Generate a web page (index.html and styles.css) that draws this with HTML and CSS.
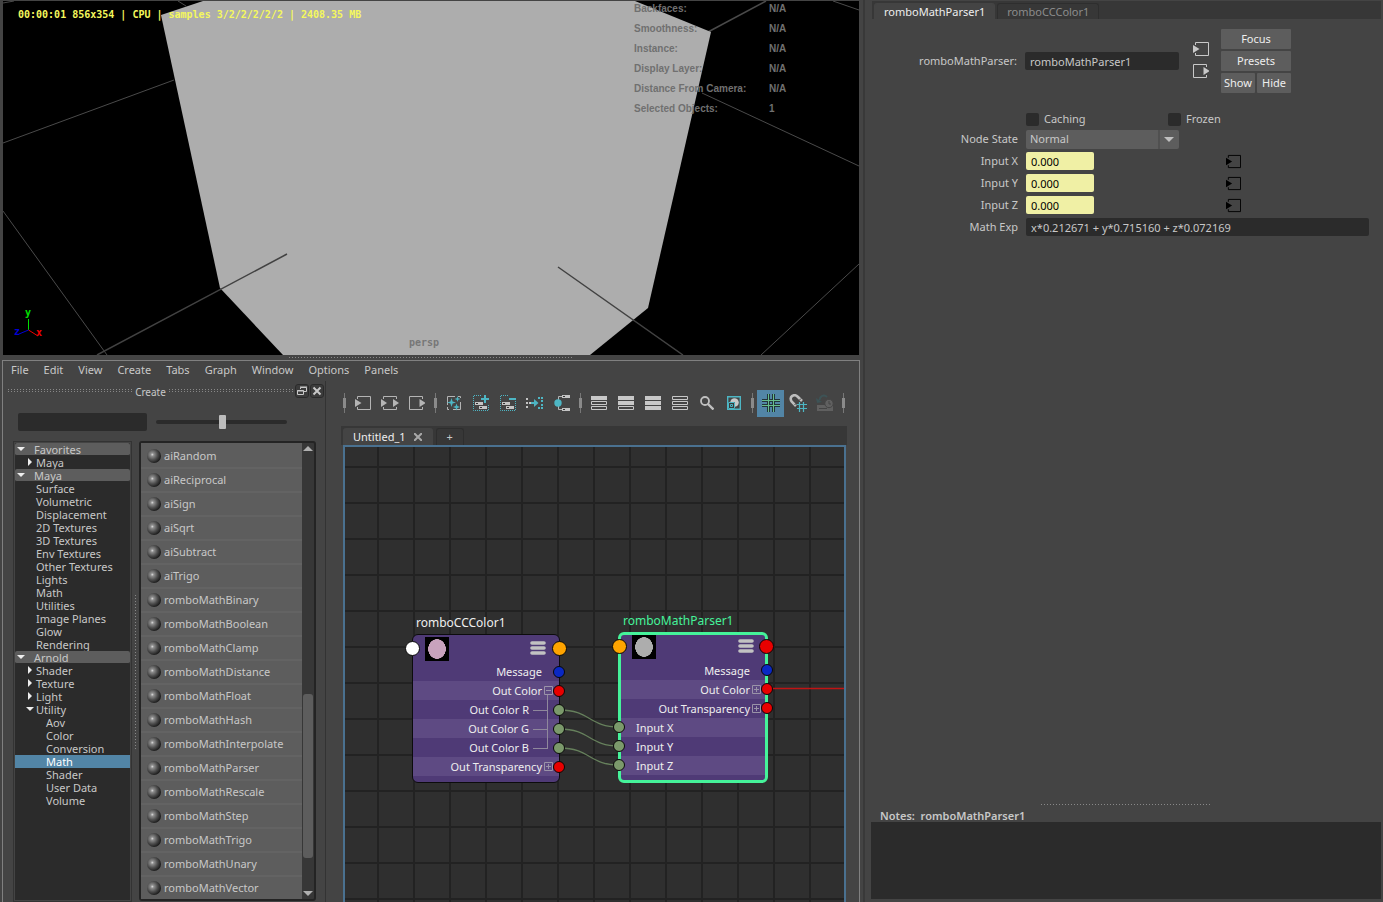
FILE: index.html
```html
<!DOCTYPE html>
<html lang="en">
<head>
<meta charset="utf-8">
<title>Node Editor</title>
<link rel="stylesheet" href="styles.css">
</head>
<body>
<svg class="defs" aria-hidden="true">
  <defs>
    <radialGradient id="ballFill" cx="0.38" cy="0.4" r="0.62">
      <stop offset="0" stop-color="#dcdcdc"/><stop offset="0.18" stop-color="#8f8f8f"/><stop offset="0.6" stop-color="#4e4e4e"/><stop offset="1" stop-color="#1c1c1c"/>
    </radialGradient>
    <symbol id="ball" viewBox="0 0 14 14"><circle cx="7" cy="7" r="7" fill="url(#ballFill)"/></symbol>
    <symbol id="into" viewBox="0 0 16 16"><path d="M2.500 4V1.500H15.500V14.500H2.500V12" fill="none" stroke="currentColor"/><path d="M0 4L6.500 8L0 12Z" fill="currentColor"/></symbol>
    <symbol id="out" viewBox="0 0 16 16"><path d="M13.500 4V1.500H0.500V14.500H13.500V12" fill="none" stroke="currentColor"/><path d="M10.500 4L17 8L10.500 12Z" fill="currentColor"/></symbol>
    <symbol id="both" viewBox="0 0 18 16"><path d="M2.500 4V1.500H15.500V4M2.500 12V14.500H15.500V12" fill="none" stroke="currentColor"/><path d="M0 4L6 8L0 12ZM12 4L18 8L12 12Z" fill="currentColor"/></symbol>
    <symbol id="bars" viewBox="0 0 14 14"><path d="M1 2H13M1 7H13M1 12H13" stroke="#c2c2c2" stroke-width="3.600" stroke-linecap="round"/></symbol>
    <symbol id="plusbox" viewBox="0 0 9 9"><path d="M.5.5H8.500V8.500H.5ZM2 4.500H7M4.500 2V7" fill="none" stroke="#9a93a8"/></symbol>
    <symbol id="minusbox" viewBox="0 0 9 9"><path d="M.5.5H8.500V8.500H.5ZM2 4.500H7" fill="none" stroke="#9a93a8"/></symbol>
  </defs>
</svg>
<div class="app">
  <main class="workspace">
    <section class="viewport" aria-label="Viewport">
      <svg class="scene" viewBox="3 1 856 354" preserveAspectRatio="xMidYMid slice">
        <rect x="3" y="1" width="856" height="354" fill="#000"/>
        <g fill="none" stroke="#4a4a4a" stroke-width="1">
          <path d="M3 3L14 1M178 1L186 6M3 143L174 80M3 211L107 355M833 1L859 10M702 93L859 166M859 264L761 355"/>
          <path d="M708 32L766 1" stroke-width="1.500"/>
        </g>
        <path d="M203 1L161 15L220 288L283 355H590L648 308L711 32L635 1Z" fill="#adadad"/>
        <path d="M97 355L287 254M558 267L683 355" stroke="#424242" stroke-width="1.500"/>
        <path d="M28.500 330V319" stroke="#00e000"/>
        <path d="M28.500 330L38 336" stroke="#f00000"/>
        <path d="M28.500 330L19 334" stroke="#0000d8"/>
        <g class="axis">
          <text x="25" y="316" fill="#00e000">y</text>
          <text x="36" y="336" fill="#f00000">x</text>
          <text x="14" y="335" fill="#0000d8">z</text>
        </g>
      </svg>
      <div class="stats">00:00:01 856x354 | CPU | samples 3/2/2/2/2/2 | 2408.35 MB</div>
      <dl class="hud">
        <dt>Backfaces:</dt><dd>N/A</dd>
        <dt>Smoothness:</dt><dd>N/A</dd>
        <dt>Instance:</dt><dd>N/A</dd>
        <dt>Display Layer:</dt><dd>N/A</dd>
        <dt>Distance From Camera:</dt><dd>N/A</dd>
        <dt>Selected Objects:</dt><dd>1</dd>
      </dl>
      <div class="camera">persp</div>
    </section>
    <div class="splitter"></div>
    <section class="editor">
      <nav class="menubar">
        <button>File</button><button>Edit</button><button>View</button><button>Create</button><button>Tabs</button><button>Graph</button><button>Window</button><button>Options</button><button>Panels</button>
      </nav>
      <div class="editor-body">
        <aside class="create">
          <header class="create-head">
            <span class="grip"></span><h2>Create</h2><span class="grip"></span>
            <button class="mini" aria-label="Float"><svg width="12" height="12" viewBox="0 0 12 12" fill="none" stroke="#c8c8c8"><path d="M4.500 4V2.500H10.500V6.500H8M4 2H11" /><path d="M1.500 5.500H7.500V9.500H1.500ZM1 6H8"/></svg></button>
            <button class="mini" aria-label="Close"><svg width="12" height="12" viewBox="0 0 12 12" stroke="#c8c8c8" stroke-width="2"><path d="M2.500 2.500L9.500 9.500M9.500 2.500L2.500 9.500"/></svg></button>
          </header>
          <div class="create-tools">
            <input class="search" type="text" aria-label="Search nodes">
            <input class="slider" type="range" min="0" max="100" value="51" aria-label="Icon size">
          </div>
          <div class="create-lists">
            <ul class="tree" role="tree">
              <li class="group open">Favorites</li>
              <li class="sub closed">Maya</li>
              <li class="group open">Maya</li>
              <li>Surface</li>
              <li>Volumetric</li>
              <li>Displacement</li>
              <li>2D Textures</li>
              <li>3D Textures</li>
              <li>Env Textures</li>
              <li>Other Textures</li>
              <li>Lights</li>
              <li>Math</li>
              <li>Utilities</li>
              <li>Image Planes</li>
              <li>Glow</li>
              <li>Rendering</li>
              <li class="group open">Arnold</li>
              <li class="sub closed">Shader</li>
              <li class="sub closed">Texture</li>
              <li class="sub closed">Light</li>
              <li class="sub open">Utility</li>
              <li class="deep">Aov</li>
              <li class="deep">Color</li>
              <li class="deep">Conversion</li>
              <li class="deep selected">Math</li>
              <li class="deep">Shader</li>
              <li class="deep">User Data</li>
              <li class="deep">Volume</li>
            </ul>
            <div class="vgrip"></div>
            <div class="library">
              <div class="items">
                <button><svg><use href="#ball"/></svg>aiRandom</button>
                <button><svg><use href="#ball"/></svg>aiReciprocal</button>
                <button><svg><use href="#ball"/></svg>aiSign</button>
                <button><svg><use href="#ball"/></svg>aiSqrt</button>
                <button><svg><use href="#ball"/></svg>aiSubtract</button>
                <button><svg><use href="#ball"/></svg>aiTrigo</button>
                <button><svg><use href="#ball"/></svg>romboMathBinary</button>
                <button><svg><use href="#ball"/></svg>romboMathBoolean</button>
                <button><svg><use href="#ball"/></svg>romboMathClamp</button>
                <button><svg><use href="#ball"/></svg>romboMathDistance</button>
                <button><svg><use href="#ball"/></svg>romboMathFloat</button>
                <button><svg><use href="#ball"/></svg>romboMathHash</button>
                <button><svg><use href="#ball"/></svg>romboMathInterpolate</button>
                <button><svg><use href="#ball"/></svg>romboMathParser</button>
                <button><svg><use href="#ball"/></svg>romboMathRescale</button>
                <button><svg><use href="#ball"/></svg>romboMathStep</button>
                <button><svg><use href="#ball"/></svg>romboMathTrigo</button>
                <button><svg><use href="#ball"/></svg>romboMathUnary</button>
                <button><svg><use href="#ball"/></svg>romboMathVector</button>
              </div>
              <div class="scrollbar"><i class="arrow up"></i><span class="above"></span><span class="thumb"></span><span class="below"></span><i class="arrow down"></i></div>
            </div>
          </div>
        </aside>
        <div class="graph">
          <div class="toolbar">
            <i class="sep"></i>
            <button aria-label="Input connections"><svg width="16" height="16"><use href="#into"/></svg></button>
            <button aria-label="Input and output connections"><svg width="18" height="16"><use href="#both"/></svg></button>
            <button aria-label="Output connections"><svg width="16" height="16"><use href="#out"/></svg></button>
            <i class="sep"></i>
            <button aria-label="Rearrange graph"><svg width="16" height="16" viewBox="0 0 16 16"><path d="M1.500 10V1.500H9M14.500 7V14.500H7M1.500 12V14.500H3M12 1.500H14.500V3" fill="none" stroke="#b4b4b4"/><path d="M5.500 3L6.600 6.400L10 7.500L6.600 8.600L5.500 12L4.400 8.600L1 7.500L4.400 6.400ZM11.500 1L12.200 3.300L14.500 4L12.200 4.700L11.500 7L10.800 4.700L8.500 4L10.800 3.300ZM10.500 8.500L11.400 11.100L14 12L11.400 12.900L10.500 15.500L9.600 12.900L7 12L9.600 11.100Z" fill="#4db6c4"/></svg></button>
            <button aria-label="Add selected nodes"><svg width="16" height="16" viewBox="0 0 16 16"><path d="M8 .5H.5V15.500H15.500V9" fill="none" stroke="#4db6c4" stroke-dasharray="1 1"/><path d="M2 7H10V10H2ZM6 11H14V14H6Z" fill="#c4c4c4"/><path d="M3 8.500H5M7 12.500H9" stroke="#333"/><path d="M12 0V8M8 4H16" stroke="#4db6c4" stroke-width="2"/></svg></button>
            <button aria-label="Remove selected nodes"><svg width="16" height="16" viewBox="0 0 16 16"><path d="M8 .5H.5V15.500H15.500V6" fill="none" stroke="#4db6c4" stroke-dasharray="1 1"/><path d="M2 7H10V10H2ZM6 11H14V14H6Z" fill="#c4c4c4"/><path d="M3 8.500H5M7 12.500H9" stroke="#333"/><path d="M9 4H16" stroke="#4db6c4" stroke-width="2"/></svg></button>
            <button aria-label="Frame"><svg width="17" height="16" viewBox="0 0 17 16"><path d="M0 3H2V5H0ZM0 7H2V9H0ZM0 11H2V13H0ZM3 7H5V9H3Z" fill="#c4c4c4"/><path d="M5 7H8V4L12.500 8L8 12V9H5ZM12 2H14V4H12ZM15 2H17V4H15ZM15 5H17V7H15ZM15 9H17V11H15ZM15 12H17V14H15ZM12 12H14V14H12Z" fill="#4db6c4"/></svg></button>
            <button aria-label="Pin connections"><svg width="16" height="18" viewBox="0 0 16 18"><path d="M8 2.500H4.500V15.500H8" fill="none" stroke="#b4b4b4"/><path d="M8 1H16V4H8ZM8 14H16V17H8Z" fill="#c4c4c4"/><path d="M9 2.500H11M9 15.500H11" stroke="#333"/><circle cx="4" cy="9" r="3.700" fill="#4db6c4"/></svg></button>
            <i class="sep"></i>
            <button aria-label="Simple view"><svg width="16" height="14" viewBox="0 0 16 14"><path d="M0 0H16V4H0Z" fill="#c8c8c8"/><path d="M.5 5.500H15.500V8.500H.5ZM.5 10.500H15.500V13.500H.5Z" fill="none" stroke="#c8c8c8"/></svg></button>
            <button aria-label="Connected view"><svg width="16" height="14" viewBox="0 0 16 14"><path d="M0 0H16V4H0ZM0 5H16V9H0Z" fill="#c8c8c8"/><path d="M.5 10.500H15.500V13.500H.5Z" fill="none" stroke="#c8c8c8"/></svg></button>
            <button aria-label="Full view"><svg width="16" height="14" viewBox="0 0 16 14"><path d="M0 0H16V4H0ZM0 5H16V9H0ZM0 10H16V14H0Z" fill="#c8c8c8"/></svg></button>
            <button aria-label="Custom view"><svg width="16" height="14" viewBox="0 0 16 14"><path d="M.5.5H15.500V3.500H.5ZM.5 5.500H15.500V8.500H.5ZM.5 10.500H15.500V13.500H.5Z" fill="none" stroke="#c8c8c8"/></svg></button>
            <button aria-label="Find"><svg width="14" height="14" viewBox="0 0 14 14" fill="none" stroke="#c0c0c0"><circle cx="5" cy="5" r="4" stroke-width="1.800"/><path d="M8 8L13.500 13.500" stroke-width="2.400"/></svg></button>
            <button aria-label="Swatches"><svg width="14" height="14" viewBox="0 0 14 14"><path d="M.7.7H13.300V13.300H.7Z" fill="none" stroke="#4db6c4" stroke-width="1.400"/><circle cx="7.500" cy="6.500" r="4.300" fill="#c8c8c8"/><path d="M1 6H8V13H1Z" fill="#3a3a3a"/><path d="M1.500 6.500H7.500V12.500H1.500ZM3.500 8.500H5.500V10.500H3.500Z" fill="none" stroke="#4db6c4"/></svg></button>
            <i class="sep"></i>
            <button class="on" aria-label="Grid" aria-pressed="true"><svg width="18" height="18" viewBox="0 0 18 18" fill="none"><path d="M6.500 0V18M11.500 0V18M0 6.500H18M0 11.500H18" stroke="#22343a" stroke-width="3"/><path d="M6.500 0V18M11.500 0V18M0 6.500H18M0 11.500H18" stroke="#67bd8c"/></svg></button>
            <button aria-label="Snap to grid"><svg width="18" height="18" viewBox="0 0 18 18" fill="none"><path d="M7 12L3 8C-1 3 5-1 9 3L13 7" stroke="#bdbdbd" stroke-width="2.600"/><path d="M5.500 11L7.500 9M10 6.500L12 4.500" stroke="#444" stroke-width="1"/><path d="M10.500 8V18M14.500 8V18M8 10.500H18M8 14.500H18" stroke="#4db6c4" stroke-width="1.200"/></svg></button>
            <button aria-label="Restore" disabled><svg width="18" height="18" viewBox="0 0 18 18"><path d="M1 11H17V17H1Z" fill="#606060"/><path d="M3 14.500H11" stroke="#444"/><circle cx="13" cy="9.500" r="4.200" fill="#606060" stroke="#444"/><path d="M13 7V10H15" fill="none" stroke="#444"/><path d="M11 3C8 0 4 2 3.500 6" fill="none" stroke="#3d5356" stroke-width="2"/><path d="M0 4L6 8L1 9Z" fill="#3d5356"/></svg></button>
            <i class="sep"></i>
          </div>
          <div class="graph-tabs">
            <div class="gtab current"><button>Untitled_1</button><button class="x" aria-label="Close tab"><svg width="8" height="8" viewBox="0 0 8 8"><path d="M0 0L8 8M8 0L0 8" stroke="#a8a8a8" stroke-width="2"/></svg></button></div>
            <button class="gtab add">+</button>
          </div>
          <div class="canvas">
            <svg class="wires" aria-hidden="true">
              <g fill="none" stroke="#66805c" stroke-width="1.300">
                <path d="M215 263C245 263 244 280 274 280"/>
                <path d="M215 282C245 282 244 299 274 299"/>
                <path d="M215 301C245 301 244 318 274 318"/>
              </g>
              <path d="M422 241.500H4000" stroke="#c01414" stroke-width="1.300"/>
            </svg>
            <article class="node cc">
              <h3>romboCCColor1</h3>
              <div class="node-head"><i class="port in big white"></i><span class="swatch pink"></span><svg><use href="#bars"/></svg><i class="port big orange"></i></div>
              <ul>
                <li>Message<i class="port blue"></i></li>
                <li>Out Color<svg><use href="#minusbox"/></svg><i class="port red"></i></li>
                <li class="child">Out Color R<i class="port green"></i></li>
                <li class="child">Out Color G<i class="port green"></i></li>
                <li class="child last">Out Color B<i class="port green"></i></li>
                <li>Out Transparency<svg><use href="#plusbox"/></svg><i class="port red"></i></li>
              </ul>
            </article>
            <article class="node parser">
              <h3>romboMathParser1</h3>
              <div class="node-head"><i class="port in big orange"></i><span class="swatch grey"></span><svg><use href="#bars"/></svg><i class="port big red"></i></div>
              <ul>
                <li>Message<i class="port blue"></i></li>
                <li>Out Color<svg><use href="#plusbox"/></svg><i class="port red"></i></li>
                <li>Out Transparency<svg><use href="#plusbox"/></svg><i class="port red"></i></li>
                <li class="input"><i class="port in green"></i>Input X</li>
                <li class="input"><i class="port in green"></i>Input Y</li>
                <li class="input"><i class="port in green"></i>Input Z</li>
              </ul>
            </article>
          </div>
        </div>
      </div>
    </section>
  </main>
  <aside class="attributes">
    <div class="attr-tabs"><button class="current">romboMathParser1</button><button>romboCCColor1</button></div>
    <form class="attr-form">
      <div class="name-row">
        <label for="node-name">romboMathParser:</label>
        <input id="node-name" type="text" value="romboMathParser1">
        <div class="io"><button type="button" aria-label="Go to input"><svg width="16" height="16"><use href="#into"/></svg></button><button type="button" aria-label="Go to output"><svg width="16" height="16"><use href="#out"/></svg></button></div>
        <div class="actions"><button type="button" class="wide">Focus</button><button type="button" class="wide">Presets</button><button type="button">Show</button><button type="button">Hide</button></div>
      </div>
      <div class="checks">
        <label><input type="checkbox">Caching</label>
        <label><input type="checkbox">Frozen</label>
      </div>
      <div class="row"><label for="state">Node State</label><div class="select"><select id="state"><option>Normal</option></select></div></div>
      <div class="row"><label for="ix">Input X</label><input id="ix" class="num" type="text" value="0.000"><button type="button" class="map" aria-label="Input X connection"><svg width="15" height="15"><use href="#into"/></svg></button></div>
      <div class="row"><label for="iy">Input Y</label><input id="iy" class="num" type="text" value="0.000"><button type="button" class="map" aria-label="Input Y connection"><svg width="15" height="15"><use href="#into"/></svg></button></div>
      <div class="row"><label for="iz">Input Z</label><input id="iz" class="num" type="text" value="0.000"><button type="button" class="map" aria-label="Input Z connection"><svg width="15" height="15"><use href="#into"/></svg></button></div>
      <div class="row"><label for="exp">Math Exp</label><input id="exp" class="exp" type="text" value="x*0.212671 + y*0.715160 + z*0.072169"></div>
    </form>
    <div class="notes">
      <span class="notes-grip"></span>
      <label for="notes">Notes:&nbsp; romboMathParser1</label>
      <textarea id="notes"></textarea>
    </div>
  </aside>
</div>
</body>
</html>
```
FILE: styles.css
```css
:root {
  --bg: #444;
  --dark: #2b2b2b;
  --bar: #373737;
  --mid: #5d5d5d;
  --text: #c8c8c8;
  --accent: #5285a6;
}
* { box-sizing: border-box; }
body {
  margin: 0;
  background: var(--bg);
  color: var(--text);
  font: 11px/14px "Noto Sans", "Open Sans", sans-serif;
}
button, input, select, textarea { font: inherit; color: inherit; }
button { background: none; border: 0; padding: 0; }
input, textarea { background: var(--dark); border: 0; border-radius: 2px; }
ul, dl, dd, h2, h3 { margin: 0; padding: 0; list-style: none; font-size: inherit; }
h2, h3 { font-weight: normal; }
svg { display: block; flex: none; }
.defs { position: absolute; width: 0; height: 0; }

.app { display: grid; grid-template-columns: minmax(0, 1fr) 520px; height: 100vh; overflow: hidden; }
.workspace { display: grid; grid-template-rows: minmax(0, 354fr) 5px minmax(0, 542fr); min-height: 0; padding: 1px 3px 0 2px; }

/* Viewport */
.viewport { position: relative; overflow: hidden; margin-left: 1px; margin-right: 1px; }
.scene { width: 100%; height: 100%; }
.axis { font: bold 10px "DejaVu Sans Mono", monospace; }
.stats {
  position: absolute; top: 7px; left: 15px;
  color: #f4f85c; font: bold 10px/14px "DejaVu Sans Mono", monospace;
}
.hud {
  position: absolute; top: -2px; right: 40px;
  display: grid; grid-template-columns: 135px 50px; grid-auto-rows: 20px;
  color: #707070; font: bold 10px/20px "Liberation Sans", sans-serif;
}
.camera {
  position: absolute; bottom: 5px; left: 0; right: 14px; text-align: center;
  color: #777; font: bold 10px/14px "DejaVu Sans Mono", monospace;
}
.splitter {
  justify-self: center; align-self: center; width: 284px; height: 1px;
  background: repeating-linear-gradient(90deg, #888 0 1px, transparent 1px 3px);
}

/* Node editor frame */
.editor { display: flex; flex-direction: column; min-height: 0; border: 1px solid #808080; border-bottom: 0; }
.menubar { display: flex; gap: 15px; height: 20px; padding: 0 8px 2px; align-items: center; }
.editor-body { display: flex; flex: 1; min-height: 0; }

/* Create panel */
.create { display: flex; flex-direction: column; width: 323px; border-right: 1px solid #333; padding: 2px 2px 0 5px; }
.create-head { display: flex; align-items: center; gap: 3px; height: 15px; }
.create-head h2 { padding-top: 2px; font-size: 10px; }
.grip {
  flex: 1; height: 3px;
  background: repeating-linear-gradient(90deg, #888 0 1px, transparent 1px 3px) top / 100% 1px no-repeat,
    repeating-linear-gradient(90deg, #888 0 1px, transparent 1px 3px) bottom / 100% 1px no-repeat;
}
.mini { width: 12px; height: 12px; border-radius: 2px; background: #3b3b3b; outline: 1px solid #2a2a2a; }
.create-tools { display: flex; align-items: center; gap: 9px; padding: 15px 0 0 10px; }
.search { width: 129px; height: 18px; }
.slider { appearance: none; width: 131px; height: 4px; margin: 0; }
.slider::-webkit-slider-thumb { appearance: none; width: 7px; height: 14px; border-radius: 1px; background: #bdbdbd; }
.create-lists { display: flex; flex: 1; min-height: 0; padding: 10px 7px 0 5px; }
.tree { width: 119px; border: 1px solid #333; padding: 1px; background: var(--dark); background-clip: content-box; line-height: 13px; }
.tree li { position: relative; height: 13px; padding-left: 21px; }
.tree .group { padding-left: 19px; background: var(--mid); border-bottom: 1px solid var(--dark); border-radius: 2px; }
.tree .deep { padding-left: 31px; }
.tree .selected { background: var(--accent); color: #fff; }
.tree .open::before, .tree .closed::before { content: ""; position: absolute; left: 2px; top: 4px; border: 4px solid transparent; border-top-color: #eee; border-bottom: 0; }
.tree .sub::before { left: 11px; }
.tree .closed::before { left: 13px; top: 2px; border: 4px solid transparent; border-left-color: #eee; border-right: 0; }
.vgrip { width: 7px; align-self: center; height: 154px; background: repeating-linear-gradient(#888 0 1px, transparent 1px 3px) 3px 0 / 1px 100% no-repeat; }
.library { display: flex; width: 177px; border: 2px solid #242424; border-radius: 3px; margin-bottom: 1px; background: var(--bar); }
.items { flex: 1; overflow: hidden; padding-top: 2px; background: var(--mid); }
.items button { display: flex; align-items: center; gap: 3px; width: 100%; height: 24px; padding-left: 6px; border-bottom: 2px solid #636363; text-align: left; }
.items svg { width: 14px; height: 14px; }
.scrollbar { display: flex; flex-direction: column; width: 12px; padding: 3px 1px; }
.thumb { flex: 162; border-radius: 3px; background: var(--mid); }
.above { flex: 240; }
.below { flex: 33; }
.arrow { height: 5px; align-self: center; border: 5px solid transparent; }
.arrow.up { border-top: 0; border-bottom-color: #b0b0b0; }
.arrow.down { border-bottom: 0; border-top-color: #b0b0b0; }

/* Graph area */
.graph { display: flex; flex: 1; flex-direction: column; min-width: 0; padding: 8px 12px 0 15px; }
.toolbar { display: flex; align-items: center; height: 28px; margin: 0 -2px; }
.toolbar button { display: grid; place-items: center; width: 27px; height: 27px; flex: none; color: #b4b4b4; }
.toolbar .on { background: var(--accent); }
.sep { width: 10px; height: 20px; flex: none; background: linear-gradient(#8a8a8a, #8a8a8a) center / 3px 10px no-repeat, linear-gradient(#777, #777) center / 1px 20px no-repeat; }
.graph-tabs { display: flex; gap: 3px; height: 19px; margin: 9px 0 0; padding: 2px 2px 0; background: var(--bar); }
.gtab { display: flex; align-items: center; gap: 8px; height: 17px; padding: 0 11px 0 10px; border-radius: 3px 3px 0 0; }
.gtab.current { background: var(--bg); color: #eee; }
.gtab.add { width: 28px; border: 1px solid #2e2e2e; border-bottom: 0; justify-content: center; padding: 0; }
.canvas {
  position: relative; flex: 1; overflow: hidden; margin: 0 1px 0 2px;
  border: 2px solid #4a7190; border-bottom: 0;
  background: repeating-linear-gradient(90deg, transparent 0 32px, #222 32px 34px, transparent 34px 36px),
    repeating-linear-gradient(transparent 0 19px, #222 19px 21px, transparent 21px 36px), #2f2f2f;
}
.wires { position: absolute; inset: 0; width: 100%; height: 100%; }

/* Nodes */
.node { position: absolute; width: 148px; height: 149px; border: 1px solid #0c0c0c; border-radius: 6px; background: #4f3a76; color: #eee; line-height: 19px; }
.node.cc { left: 67px; top: 187px; }
.node.parser { left: 273px; top: 185px; width: 150px; height: 151px; border: 3px solid #45f39a; }
.node h3 { position: absolute; left: 3px; top: -22px; font-size: 12px; }
.node.parser h3 { left: 2px; top: -24px; color: #45f39a; }
.node-head { position: relative; display: flex; justify-content: space-between; height: 27px; padding: 2px 13px 0 12px; }
.parser .node-head { height: 26px; padding: 0 11px; }
.node-head svg { width: 16px; height: 14px; margin-top: 4px; }
.swatch { width: 24px; height: 24px; background: radial-gradient(ellipse 9px 10px, var(--dot) 96%, #000); }
.pink { --dot: #c8a2bd; }
.grey { --dot: #adadad; }
.node li { position: relative; display: flex; align-items: center; justify-content: flex-end; height: 19px; padding-right: 17px; }
.parser li { padding-right: 15px; }
.node li:nth-child(even) { background: #5e4a83; }
.node li svg { position: absolute; right: 6px; top: 5px; width: 9px; height: 9px; }
.parser li svg { right: 4px; }
.node li.child { padding-right: 30px; }
.child::after { content: ""; position: absolute; right: 11px; top: -5px; width: 14px; height: 15px; border: solid #8f889c; border-width: 0 1px 1px 0; }
.child + .child::after { top: -9px; height: 19px; }
.node li.input { justify-content: flex-start; padding-left: 15px; }
.port { position: absolute; z-index: 1; right: -6px; top: 4px; width: 12px; height: 12px; border: 1px solid #080808; border-radius: 50%; }
.port.in { right: auto; left: -6px; }
.port.big { right: -8px; top: 6px; width: 15px; height: 15px; }
.port.big.in { right: auto; left: -8px; }
.parser .port { right: -8px; top: 3px; }
.parser .port.in { right: auto; left: -8px; }
.parser .port.big { right: -9px; top: 4px; }
.parser .port.big.in { right: auto; left: -9px; }
.white { background: #fff; }
.orange { background: #ffa400; }
.blue { background: #0a28c4; }
.red { background: #e80000; }
.green { background: #7b996b; }

/* Attribute editor */
.attributes { display: flex; flex-direction: column; min-height: 0; border-left: 2px solid #393939; padding: 1px 2px 3px 6px; }
.attr-tabs { display: flex; gap: 2px; height: 18px; margin-left: 1px; padding: 2px 2px 0; background: var(--bar); }
.attr-tabs button { padding: 0 9px; border: 1px solid #2e2e2e; border-bottom: 0; border-radius: 3px 3px 0 0; color: #8c8c8c; }
.attr-tabs .current { border-color: var(--bg); background: var(--bg); color: #eee; }
.attr-form { flex: 1; }
.name-row { display: grid; grid-template-columns: 146px 154px 16px 70px; align-items: center; padding-top: 10px; column-gap: 8px; }
.name-row label { text-align: right; }
.name-row > input { height: 18px; padding: 0 5px; }
.io { display: grid; gap: 6px; margin: 0 0 2px 6px; }
.actions { display: grid; grid-template-columns: 1fr 1fr; gap: 2px; margin-left: 10px; width: 70px; color: #eee; }
.actions button { height: 20px; background: var(--mid); border-radius: 1px; }
.actions .wide { grid-column: span 2; }
.checks { display: flex; padding: 19px 0 2px 155px; }
.checks label { display: flex; align-items: center; gap: 5px; width: 142px; }
.checks input, .select select { appearance: none; margin: 0; }
.checks input { width: 13px; height: 13px; }
.row { display: flex; align-items: center; height: 22px; padding-right: 12px; }
.row label { width: 147px; margin-right: 8px; text-align: right; }
.row input { height: 18px; padding: 0 5px; }
.select { position: relative; width: 153px; }
.select select { display: block; width: 100%; height: 19px; padding: 0 4px; border: 0; border-radius: 2px; background: linear-gradient(90deg, transparent 132px, #505050 132px 134px, transparent 134px) var(--mid); }
.select::after { content: ""; position: absolute; right: 5px; top: 7px; border: 5px solid transparent; border-top-color: #c0c0c0; border-bottom: 0; pointer-events: none; }
.row .num { width: 68px; background: #f0f0a5; color: #000; }
.row .exp { flex: 1; min-width: 0; }
.map { margin-left: 132px; color: #000; }
.notes { display: flex; flex-direction: column; }
.notes-grip { width: 170px; height: 1px; margin: 0 auto 4px 170px; background: repeating-linear-gradient(90deg, #888 0 1px, transparent 1px 3px); }
.notes label { padding-left: 9px; font-weight: 600; line-height: 13px; }
.notes textarea { height: 77px; resize: none; border-radius: 0; }
```
